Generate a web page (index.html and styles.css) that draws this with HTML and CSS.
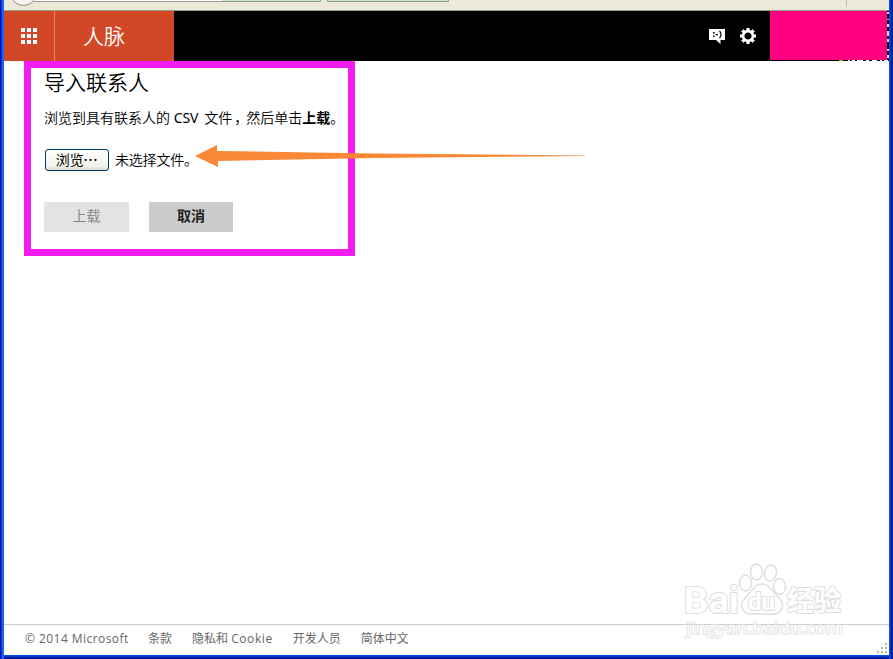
FILE: index.html
```html
<!DOCTYPE html>
<html lang="zh-CN">
<head>
<meta charset="utf-8">
<title>导入联系人</title>
<link rel="stylesheet" href="styles.css">
</head>
<body>
<div class="window">
  <div class="toolbar">
    <svg width="885" height="10" viewBox="4 0 885 10">
      <circle cx="23.500" cy="-8" r="13.500" fill="#f5f4ee" stroke="#8c8c8c"/>
      <path d="M34 0H222V1H34Z" fill="#fff"/>
      <path d="M222 0H320V1H222ZM327 0H448V1H327Z" fill="#c6e6cc"/>
      <path d="M34 1.500H320.500V0M327.500 0V1.500H448.500V0" fill="none" stroke="#9a9c8b"/>
      <path d="M846.500 0V7" stroke="#b9b9b7"/>
    </svg>
  </div>
  <header class="header">
    <div class="launcher">
      <svg width="16" height="16" viewBox="0 0 16 16" fill="#fff"><path d="M0 0h4v4H0zM6 0h4v4H6zM12 0h4v4h-4zM0 6h4v4H0zM6 6h4v4H6zM12 6h4v4h-4zM0 12h4v4H0zM6 12h4v4H6zM12 12h4v4h-4z"/></svg>
    </div>
    <div class="brand">人脉</div>
    <div class="tools">
      <svg width="16" height="16" viewBox="0 0 16 16"><path d="M0 1H16V12H11.500V16L7 12H0Z" fill="#fff"/><path d="M4 4h1.500v1.500H4zM4 7.500h1.500V9H4zM6.500 6h2.500v1.200H6.500z" fill="#000"/><path d="M10.500 3Q13.500 6.500 10.500 10" fill="none" stroke="#000" stroke-width="1.200"/></svg>
      <svg width="16" height="16" viewBox="-8 -8 16 16"><circle r="4.900" fill="none" stroke="#fff" stroke-width="2.600"/><g fill="#fff"><path id="tooth" d="M-1.600-8H1.600V-5H-1.600ZM-1.600 5H1.600V8H-1.600Z"/><use href="#tooth" transform="rotate(45)"/><use href="#tooth" transform="rotate(90)"/><use href="#tooth" transform="rotate(135)"/></g></svg>
    </div>
    <div class="account"></div>
    <svg class="edge" width="53" height="50" viewBox="836 11 53 50">
      <path d="M839 60.500h4" stroke="#9bc400"/>
      <path d="M848 60.500h2m2 0h3m2 0h6m3 0h3m3 0h5m3 0h2m2 0h4" stroke="#fff"/>
      <path d="M888 12v2m0 5v1m0 4v3m0 4v5m0 3v3m0 7v2m0 4v3" stroke="#ddd" stroke-width="2"/>
    </svg>
  </header>
  <main class="main">
    <section class="panel">
      <h1>导入联系人</h1>
      <p class="hint">浏览到具有联系人的 <span class="csv">CSV</span> 文件<span class="comma">，</span>然后单击<b>上载</b>。</p>
      <div class="file"><button class="browse">浏览<span>···</span></button><span class="status">未选择文件。</span></div>
      <div class="actions"><button class="upload" disabled>上载</button><button class="cancel">取消</button></div>
    </section>
    <svg class="arrow" width="392" height="24" viewBox="0 0 392 24"><path d="M0 11L22 0V6L180 8.500L390 10.500V11L180 13L23 16V22Z" fill="#fa8837"/></svg>
  </main>
  <footer class="footer">
    <span class="copy">© 2014 Microsoft</span><span>条款</span><span>隐私和 <i>Cookie</i></span><span>开发人员</span><span>简体中文</span>
  </footer>
  <svg class="watermark" width="170" height="80" viewBox="680 560 170 80">
    <g fill="#fff" stroke="#dedede" stroke-width="1.400">
      <ellipse cx="745.500" cy="583" rx="6" ry="8"/><ellipse cx="756.500" cy="572" rx="6" ry="8"/><ellipse cx="770.500" cy="573" rx="6" ry="8" transform="rotate(12 770.500 573)"/><ellipse cx="779.500" cy="586.500" rx="6" ry="8"/>
      <path d="M762 584C754 584 751 593 745 598C739 604 742 614 751 614H773C783 614 785 604 779 598C773 593 770 584 762 584Z"/>
    </g>
    <g class="mark-text">
      <text class="latin" x="684" y="613" font-size="36" textLength="55" lengthAdjust="spacingAndGlyphs">Bai</text>
      <text class="latin" x="748" y="610" font-size="23" textLength="27" lengthAdjust="spacingAndGlyphs">du</text>
      <text class="han" x="787" y="611" font-size="28" textLength="54" lengthAdjust="spacingAndGlyphs">经验</text>
      <text class="url" x="686" y="634" font-size="17" textLength="157" lengthAdjust="spacingAndGlyphs">jingyan.baidu.com</text>
    </g>
  </svg>
  <svg class="grip" width="10" height="10" viewBox="0 0 10 10"><path d="M8 0h2v2H8zM4 4h2v2H4zM8 4h2v2H8zM0 8h2v2H0zM4 8h2v2H4zM8 8h2v2H8z" fill="#b8b4a3"/></svg>
</div>
</body>
</html>
```
FILE: styles.css
```css
* { box-sizing: border-box; }
body {
  margin: 0;
  font-family: "Open Sans", "Noto Sans CJK SC", sans-serif;
  color: #000;
}
.window {
  position: relative;
  width: 893px;
  height: 659px;
  display: flex;
  flex-direction: column;
  border: 4px solid;
  border-color: transparent;
  border-top: 0;
  overflow: hidden;
  background:
    linear-gradient(#fff, #fff) padding-box,
    linear-gradient(90deg, #0010b0 0 1px, #0831d9 1px 2px, #1668f0 2px 4px, transparent 4px 889px, #0054ee 889px 890px, #0038d8 890px 891px, #001ea0 891px) border-box no-repeat 0 0 / 893px 659px,
    linear-gradient(0deg, #00108c 0 1px, #001ea0 1px 2px, #0038d8 2px 3px, #0054ee 3px 4px, #fff 4px) border-box no-repeat 0 0 / 893px 659px;
  background-origin: padding-box, border-box, border-box;
}
.toolbar {
  height: 11px;
  flex: none;
  background: #ece9d8;
  border-bottom: 1px solid #9b9c8a;
}
.toolbar svg { display: block; }
.header {
  position: relative;
  height: 50px;
  flex: none;
  display: flex;
  background: #000;
}
.launcher {
  width: 51px;
  display: flex;
  align-items: center;
  justify-content: center;
  background: #d24726;
  border-right: 1px solid #e08a73;
}
.brand {
  width: 119px;
  padding-left: 28px;
  background: #d24726;
  color: #fff;
  font-size: 21px;
  font-weight: 350;
  line-height: 50px;
}
.tools {
  flex: 1;
  display: flex;
  justify-content: flex-end;
  align-items: center;
  gap: 15px;
  padding-right: 14px;
}
.account {
  width: 117px;
  height: 49px;
  margin-right: 2px;
  background: #ff0080;
}
.edge { position: absolute; right: 0; top: 0; }
.main { position: relative; flex: 1; }
.panel {
  width: 331px;
  height: 195px;
  margin-left: 20px;
  padding: 0 13px;
  border: 7px solid #f21bf2;
}
h1 {
  margin: 0;
  font-size: 21px;
  font-weight: 350;
  line-height: 28px;
}
.hint {
  margin: 12px 0 0;
  font-size: 14px;
  font-weight: 350;
  line-height: 20px;
  white-space: nowrap;
}
.csv {
  display: inline-block;
  width: 27px;
  font-family: "Noto Sans", sans-serif;
  font-weight: 400;
  letter-spacing: -0.1px;
}
.comma { display: inline-block; transform: translateX(2px); }
.file {
  display: flex;
  align-items: center;
  gap: 6px;
  height: 22px;
  margin: 21px 0 0 1px;
  font-size: 14px;
  font-weight: 350;
  line-height: 22px;
}
.status { letter-spacing: -0.2px; }
button {
  font-family: inherit;
  font-size: 14px;
  padding: 0;
  border: 0;
}
.browse {
  width: 64px;
  height: 22px;
  line-height: 18px;
  border: 1px solid #003c74;
  border-radius: 3px;
  background: linear-gradient(#fff, #f3f3ec 80%, #dcd9cc);
  color: #000;
}
.browse span { letter-spacing: 1px; font-weight: 600; }
.actions {
  display: flex;
  gap: 20px;
  margin-top: 31px;
}
.actions button { height: 30px; line-height: 28px; padding-bottom: 2px; }
.upload { width: 85px; background: #e3e3e3; color: #888; }
.cancel { width: 84px; background: #ccc; color: #222; font-weight: bold; }
.arrow { position: absolute; left: 191px; top: 84px; }
.footer {
  height: 31px;
  flex: none;
  display: flex;
  gap: 20px;
  padding-left: 21px;
  border-top: 1px solid #ccc;
  color: #666;
  font-size: 12px;
  line-height: 28px;
  white-space: nowrap;
}
.copy { width: 103px; letter-spacing: 0.44px; }
.footer i { font-style: normal; letter-spacing: 0.6px; }
.watermark { position: absolute; left: 676px; top: 560px; }
.mark-text {
  fill: #fff;
  stroke: #dedede;
  stroke-width: 2px;
  stroke-linejoin: round;
  paint-order: stroke;
}
.latin { font-family: Roboto, sans-serif; font-weight: bold; }
.han { font-family: "Noto Sans CJK SC", sans-serif; font-weight: bold; }
.url { font-family: "Open Sans", sans-serif; stroke-width: 1.6px; }
.grip { position: absolute; right: 2px; bottom: 2px; }
```
